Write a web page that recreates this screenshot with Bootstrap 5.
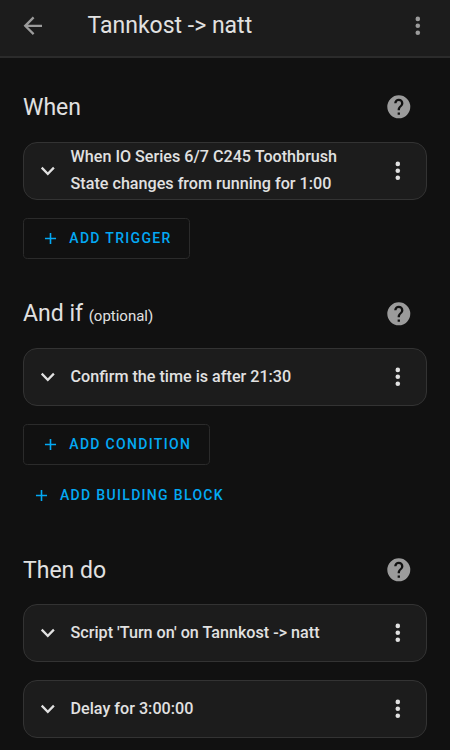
<!DOCTYPE html>
<html lang="en" data-bs-theme="dark">
<head>
<meta charset="utf-8">
<meta name="viewport" content="width=device-width, initial-scale=1">
<title>Tannkost -&gt; natt</title>
<link href="https://cdn.jsdelivr.net/npm/bootstrap@5.3.0/dist/css/bootstrap.min.css" rel="stylesheet">
<style>
body{background:#111;color:#e1e1e1;font-family:Roboto,"Liberation Sans",sans-serif;height:750px;overflow:hidden}
svg{display:block;fill:currentColor;width:27.6px;height:27.6px;flex:none}
.topbar{height:58px;background:#1c1c1c;border-bottom:2px solid #2b2b2b;padding:0 18.6px 5px 18.6px;color:#9b9b9b}
.topbar h1{font-size:23px;font-weight:400;line-height:28px;color:#e1e1e1;margin-left:41.4px;padding-top:1px}
.content{padding:0 23px}
.section-block{padding-top:38px}
.section-block:first-child{padding-top:33px}
.section-head{height:32px;padding-right:14px}
.section-head h2{font-size:23px;font-weight:400;line-height:32px;color:#e1e1e1;padding-top:2px}
.section-head small{font-size:15px}
.section-head svg{color:#9b9b9b;margin-bottom:1.4px}
.rule{height:57.5px;margin-bottom:.5px;background:#1c1c1c;border:1px solid #333;border-radius:14px;padding:0 14px 0 9.6px}
.rule p{font-size:16.15px;font-weight:500;line-height:27.5px;margin-left:9.4px}
.rule .two-line{padding-bottom:1px}
.add{--bs-btn-color:#03a9f4;--bs-btn-hover-color:#03a9f4;--bs-btn-border-color:#2b2b2b;--bs-btn-padding-x:17.3px;--bs-btn-padding-y:0;--bs-btn-border-radius:4.6px;height:41px;margin-bottom:1px;font-size:14px;font-weight:500;letter-spacing:1.32px}
.add svg{width:19px;height:19px;margin-right:9px}
.add-plain{--bs-btn-border-color:transparent;--bs-btn-padding-x:8px;margin-top:10px;margin-bottom:0}
.gap-a{margin-top:18.5px}
.section-block .add.gap-a{margin-top:18.5px}
.section-head + .rule{margin-top:18px}
.section-block:first-child .rule{margin-top:19px}
</style>
</head>
<body>
<svg class="d-none">
<symbol id="back" viewBox="0 0 24 24"><path d="M20 11H7.83l5.59-5.59L12 4l-8 8 8 8 1.41-1.41L7.83 13H20z"/></symbol>
<symbol id="dots" viewBox="0 0 24 24"><circle cx="12" cy="6" r="2"/><circle cx="12" cy="12" r="2"/><circle cx="12" cy="18" r="2"/></symbol>
<symbol id="chev" viewBox="0 0 24 24"><path d="M7.41 8.58 12 13.17l4.59-4.59L18 10l-6 6-6-6z"/></symbol>
<symbol id="plus" viewBox="0 0 24 24"><path d="M19 13h-6v6h-2v-6H5v-2h6V5h2v6h6z"/></symbol>
<symbol id="help" viewBox="0 0 24 24"><path d="M15.07 11.25l-.9.92C13.45 12.89 13 13.5 13 15h-2v-.5c0-1.11.45-2.11 1.17-2.83l1.24-1.26c.37-.36.59-.86.59-1.41a2 2 0 1 0-4 0H8a4 4 0 1 1 8 0c0 .88-.36 1.67-.93 2.25M13 19h-2v-2h2M12 2a10 10 0 1 0 0 20 10 10 0 0 0 0-20z"/></symbol>
</svg>
<header class="topbar d-flex align-items-center">
<svg><use href="#back"/></svg>
<h1 class="mb-0 flex-grow-1">Tannkost -&gt; natt</h1>
<svg><use href="#dots"/></svg>
</header>
<main class="content">
<section class="section-block">
<div class="section-head d-flex align-items-center justify-content-between"><h2 class="mb-0">When</h2><svg><use href="#help"/></svg></div>
<div class="rule gap-a d-flex align-items-center"><svg><use href="#chev"/></svg><p class="two-line mb-0 flex-grow-1">When IO Series 6/7 C245 Toothbrush<br>State changes from running for 1:00</p><svg><use href="#dots"/></svg></div>
<button class="btn add gap-a d-flex align-items-center" type="button"><svg><use href="#plus"/></svg>ADD TRIGGER</button>
</section>
<section class="section-block">
<div class="section-head d-flex align-items-center justify-content-between"><h2 class="mb-0">And if <small>(optional)</small></h2><svg><use href="#help"/></svg></div>
<div class="rule gap-a d-flex align-items-center"><svg><use href="#chev"/></svg><p class="mb-0 flex-grow-1">Confirm the time is after 21:30</p><svg><use href="#dots"/></svg></div>
<button class="btn add gap-a d-flex align-items-center" type="button"><svg><use href="#plus"/></svg>ADD CONDITION</button>
<button class="btn add add-plain d-flex align-items-center" type="button"><svg><use href="#plus"/></svg>ADD BUILDING BLOCK</button>
</section>
<section class="section-block">
<div class="section-head d-flex align-items-center justify-content-between"><h2 class="mb-0">Then do</h2><svg><use href="#help"/></svg></div>
<div class="rule gap-a d-flex align-items-center"><svg><use href="#chev"/></svg><p class="mb-0 flex-grow-1">Script 'Turn on' on Tannkost -&gt; natt</p><svg><use href="#dots"/></svg></div>
<div class="rule gap-a d-flex align-items-center"><svg><use href="#chev"/></svg><p class="mb-0 flex-grow-1">Delay for 3:00:00</p><svg><use href="#dots"/></svg></div>
</section>
</main>
<script src="https://cdn.jsdelivr.net/npm/bootstrap@5.3.0/dist/js/bootstrap.bundle.min.js"></script>
</body>
</html>
